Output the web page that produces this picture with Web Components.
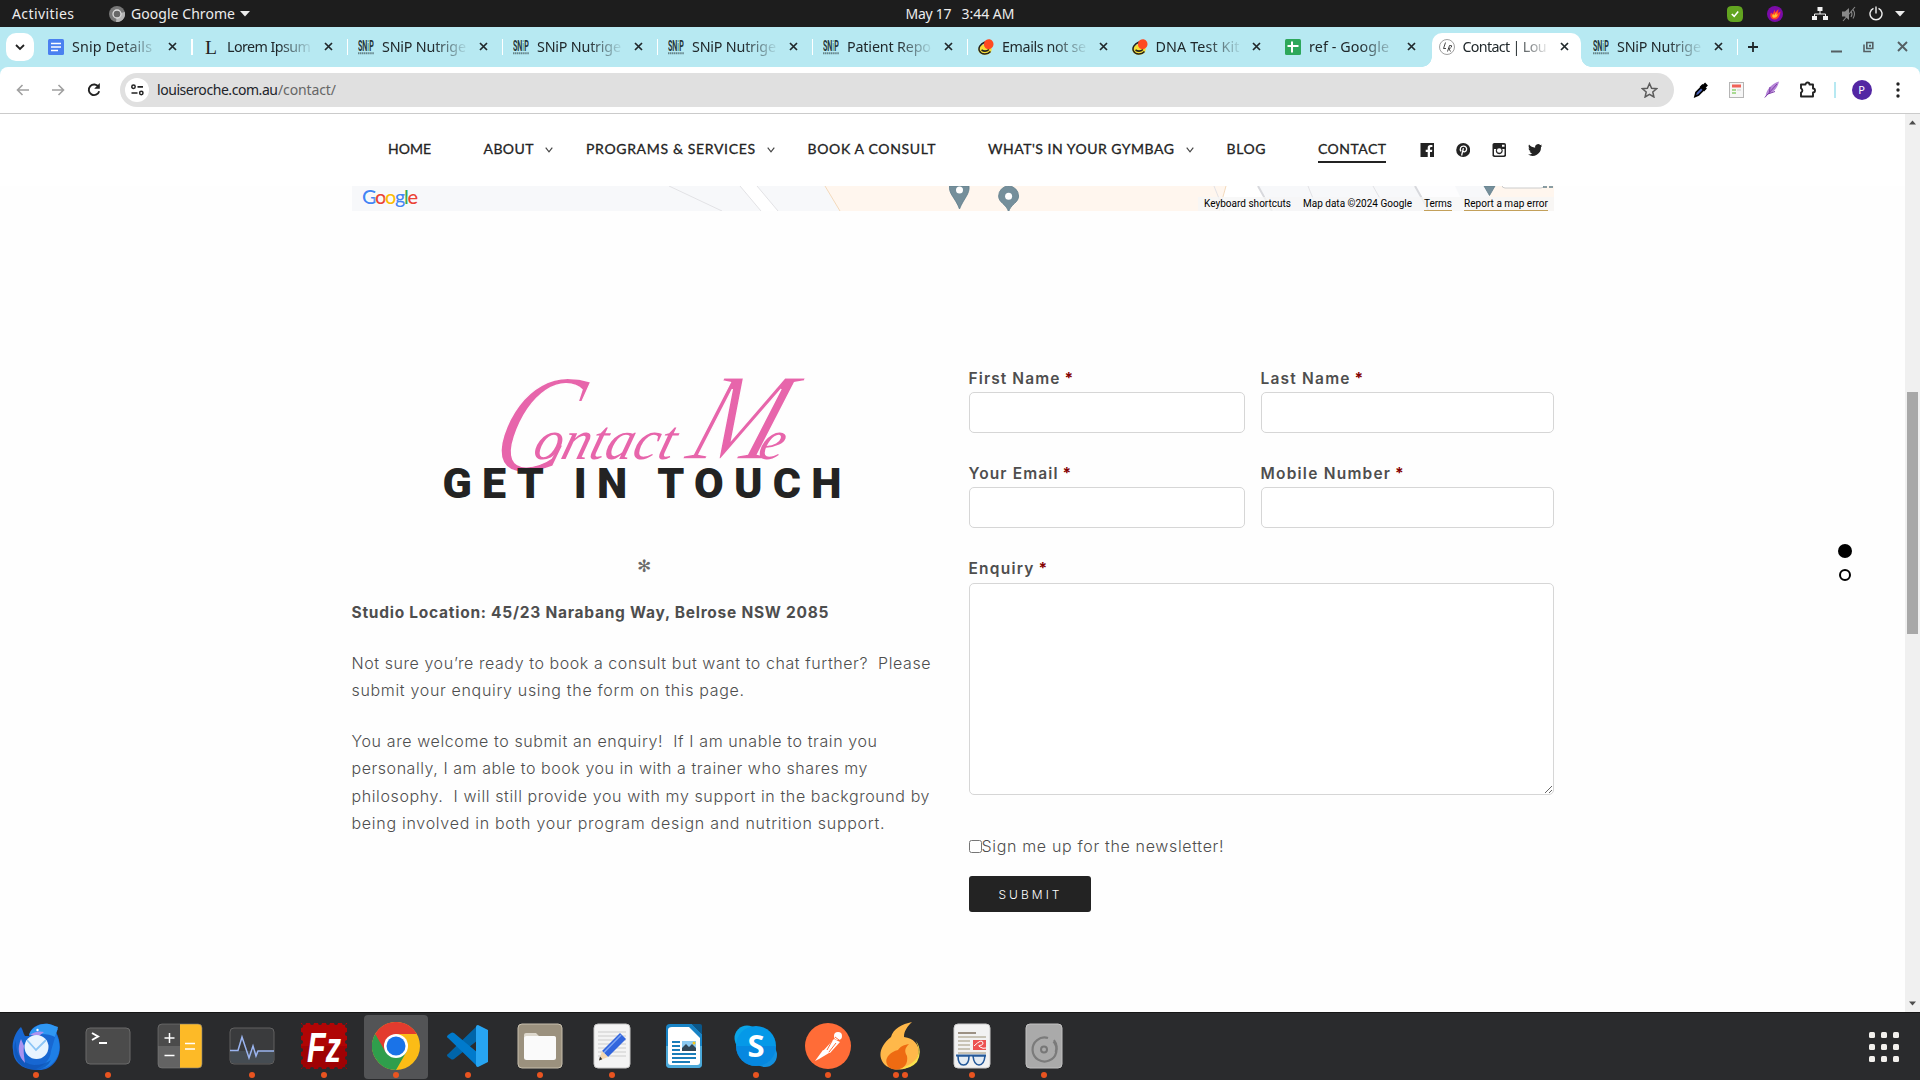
<!DOCTYPE html>
<html lang="en">
<head>
<meta charset="utf-8">
<title>Contact | Louise Roche</title>
<style>
html,body{margin:0;padding:0;overflow:hidden;background:#fefefe}
body{width:1920px;height:1080px;font-family:"Noto Sans",sans-serif}
</style>
</head>
<body>
<desk-shell></desk-shell>
<script>
const define=(name,html,setup)=>{
  const tpl=document.createElement('template');
  customElements.define(name,class extends HTMLElement{
    connectedCallback(){
      if(this.shadowRoot)return;
      const root=this.attachShadow({mode:'open'});
      tpl.innerHTML=typeof html==='function'?html(this):html;
      root.appendChild(tpl.content.cloneNode(true));
      if(setup)setup(this,root);
    }
  });
};

/* Text tracked out (or in) to a given width */
define('fit-text',`<style>:host{display:inline-block;white-space:pre;flex:none}span{display:inline-block}</style><span><slot></slot></span>`,(el,root)=>{
  const s=root.querySelector('span'),w=+el.getAttribute('w'),n=el.textContent.length;
  el.style.letterSpacing='0px';
  const nat=s.getBoundingClientRect().width;
  const ls=(w-nat)/(n-1);
  el.style.letterSpacing=ls.toFixed(3)+'px';
  el.style.width=w+'px';
});

/* ---------- system bar ---------- */
define('system-bar',`<style>
:host{display:grid;grid-template-columns:1fr auto 1fr;align-items:center;height:27px;background:#1d1d1d;color:#ececec;font:14px "Noto Sans",sans-serif}
div{display:flex;align-items:center;height:27px}
svg{display:block;flex:none}
.l{padding-left:12px}.r{justify-content:flex-end;padding-right:15px}
</style>
<div class="l"><fit-text w="62">Activities</fit-text>
<svg style="margin:0 6px 0 35px" width="16" height="16" viewBox="0 0 16 16"><circle cx="8" cy="8" r="8" fill="#777"/><path d="M8 8 15.8 6A8 8 0 0 1 7 16z" fill="#b5b5b5"/><circle cx="8" cy="8" r="4" fill="#666" stroke="#ddd" stroke-width="1.3"/></svg>
<fit-text w="104">Google Chrome</fit-text>
<svg style="margin-left:5px" width="10" height="6" viewBox="0 0 10 6"><path d="M0 0h10L5 5.5z" fill="#ececec"/></svg></div>
<div><fit-text w="46">May 17</fit-text><span style="width:10px"></span><fit-text w="53">3:44 AM</fit-text></div>
<div class="r">
<svg width="16" height="16" viewBox="0 0 16 16"><path d="M5 0h6q5 0 5 6v5q0 5-5 5H6q-6 0-6-6V4q0-4 5-4z" fill="#62a420"/><path d="M4.8 8 7.2 10.4 11.2 5.6" fill="none" stroke="#fff" stroke-width="1.6"/></svg>
<svg style="margin-left:24px" width="16" height="16" viewBox="0 0 16 16"><circle cx="8" cy="8" r="8" fill="#7b0ba8"/><path d="M7 13.500C3 12.500 2.500 9.500 4 6.500l1.500 1.500L8 3.500v3L11.500 3l-.5 4 2.500-1.500C13 10 11 14 7 13.500z" fill="#ff3d2e"/><path d="M6 11.500c-1.500-1.500-.5-3 .2-3.500l1 1.200L9.500 6v3l1.500-1c-.5 2.500-2.500 4.500-5 3.500z" fill="#ffc22d"/></svg>
<svg style="margin-left:29px" width="16" height="15" viewBox="0 0 16 15"><path d="M5.500 1h5v4h-5zM0 10h5v4H0zM11 10h5v4h-5z" fill="#f2f2f2"/><path d="M8 5v3M2.500 10V8h11v2" fill="none" stroke="#f2f2f2"/></svg>
<svg style="margin-left:13px" width="16" height="16" viewBox="0 0 16 16"><path d="M1 5.500h3L8 2v12L4 10.500H1z" fill="#888"/><path d="M10 5q2 3 0 6M12 3.500q3 4.500 0 9M2 15 14 1" fill="none" stroke="#888" stroke-width="1.100"/></svg>
<svg style="margin:0 12px 0 12px" width="14" height="15" viewBox="0 0 14 15"><path d="M4.500 2.300A6 6 0 1 0 9.500 2.300M7 .5v7" fill="none" stroke="#eee" stroke-width="1.400"/></svg>
<svg width="10" height="6" viewBox="0 0 10 6"><path d="M0 0h10L5 5.500z" fill="#ececec"/></svg>
</div>`);

/* ---------- browser tabs ---------- */
const FAV={
doc:'<rect width="16" height="16" rx="1.500" fill="#4a80f0"/><path d="M3 4.500h10M3 8h10M3 11.500h7" stroke="#fff" stroke-width="1.600"/>',
lorem:'<text x="2" y="14.500" font-family="Liberation Serif" font-size="18" textLength="12" lengthAdjust="spacingAndGlyphs" fill="#222">L</text>',
snip:'<g transform="translate(0 11.500) scale(.66 1)"><text font-family="Roboto" font-weight="700" font-size="15.500" textLength="24" lengthAdjust="spacingAndGlyphs" fill="#26383c">SN<tspan fill="#50a69b">i</tspan>P</text></g><path d="M0 14.200h16" stroke="#64848a" stroke-width="2" stroke-dasharray="1.400 .5"/>',
egg:'<ellipse cx="7" cy="10.500" rx="6.700" ry="5.300" fill="#f6de36"/><path d="M7 3C2 5 0 9 1.500 12c2 4 8 4 11 .5M3.500 11q4 2.500 7.500-.5" fill="none" stroke="#222" stroke-width="1.500"/><ellipse cx="10.700" cy="5" rx="4.800" ry="5" fill="#ff4a22" transform="rotate(12 10 5)"/>',
sheet:'<rect width="16" height="16" rx="1.500" fill="#2da75a"/><path d="M7 2.500v11M2.500 7h11" stroke="#fff" stroke-width="2"/>',
lr:'<circle cx="8" cy="8" r="7.500" fill="#fff" stroke="#888" stroke-width=".8"/><path d="M6.500 3.500 4.500 9.500h2.500M8.500 12.500 10.500 6.500q3-.5 2 1.500-.8 1.400-2.700 1.400L11.500 12.500" fill="none" stroke="#333" stroke-width=".9"/>'
};
define('browser-tab',el=>`<style>
:host{display:flex;align-items:center;width:${el.getAttribute('width')||155}px;height:34px;box-sizing:border-box;padding:0 0 7px 10px;flex:none;color:#20282b;font:14.300px "Noto Sans",sans-serif;position:relative}
:host([active]){background:#fff;border-radius:10px 10px 0 0;width:149.500px;margin:0 2px 0 3px;padding-left:7px}
.t{width:85px;margin-left:8px;white-space:nowrap;-webkit-mask:linear-gradient(90deg,#000 60%,rgba(0,0,0,.12) 98%)}
svg{display:block;flex:none}
.c{margin-left:11.500px}
.s{width:2px;height:16px;background:#fff;margin-left:13px}
:host([active]) .s,:host([nosep]) .s{display:none}
:host([active])::before,:host([active])::after{content:"";position:absolute;bottom:0;width:10px;height:10px}
:host([active])::before{left:-10px;background:radial-gradient(circle at 0 0,transparent 9.500px,#fff 10px)}
:host([active])::after{right:-10px;background:radial-gradient(circle at 100% 0,transparent 9.500px,#fff 10px)}
</style><svg width="16" height="16" viewBox="0 0 16 16">${FAV[el.getAttribute('icon')]}</svg><div class="t"><fit-text w="${el.getAttribute('t')||84}">${el.textContent}</fit-text></div>
<svg class="c" width="11" height="11" viewBox="0 0 11 11"><path d="M2 2l7 7M9 2l-7 7" stroke="#20282b" stroke-width="1.700"/></svg><i class="s"></i>`);
define('tab-strip',`<style>
:host{display:flex;height:40px;background:#b7e9f2;align-items:flex-end;position:relative}
.b{width:28px;height:28px;border-radius:10px;background:#fff;margin:0 4px 6px 6px;display:grid;place-items:center;flex:none}
.w{display:flex;align-items:center;height:34px;flex:1;padding:0 0 7px 9px;box-sizing:border-box}
svg{display:block;flex:none}
</style><div class="b"><svg width="10" height="7" viewBox="0 0 10 7"><path d="M1 1l4 4 4-4" fill="none" stroke="#222" stroke-width="1.800"/></svg></div>
<browser-tab icon="doc" t="80">Snip Details</browser-tab><browser-tab icon="lorem">Lorem Ipsum</browser-tab><browser-tab icon="snip">SNiP Nutrige</browser-tab><browser-tab icon="snip">SNiP Nutrige</browser-tab><browser-tab icon="snip">SNiP Nutrige</browser-tab><browser-tab icon="snip">Patient Repo</browser-tab><browser-tab icon="egg" width="153.500">Emails not se</browser-tab><browser-tab icon="egg" width="153.500">DNA Test Kit</browser-tab><browser-tab icon="sheet" width="153.500" t="80" nosep>ref - Google</browser-tab><browser-tab icon="lr" active>Contact | Lou</browser-tab><browser-tab icon="snip" width="154.500">SNiP Nutrige</browser-tab>
<div class="w"><svg width="12" height="12" viewBox="0 0 12 12"><path d="M6 1v10M1 6h10" stroke="#20282b" stroke-width="1.800"/></svg>
<svg style="margin-left:72px" width="11" height="12" viewBox="0 0 11 12"><path d="M0 10.500h11" stroke="#555f63" stroke-width="2"/></svg>
<svg style="margin-left:21px" width="11" height="12" viewBox="0 0 11 12"><path d="M3.800 1.500h6v6h-6z" fill="none" stroke="#555f63" stroke-width="1.600"/><path d="M1 3.500v7h7" fill="none" stroke="#555f63" stroke-width="1.600"/><path d="M6 3.700h2v2H6z" fill="#555f63"/></svg>
<svg style="margin-left:23px" width="11" height="11" viewBox="0 0 11 11"><path d="M1 1l9 9M10 1l-9 9" stroke="#555f63" stroke-width="1.900"/></svg></div>`);

/* ---------- toolbar ---------- */
define('address-bar',`<style>
:host{display:flex;align-items:center;height:47px;box-sizing:border-box;background:#b7e9f2;border-bottom:1px solid #cbcbcb}
.in{display:flex;align-items:center;background:#fff;border-radius:8px 8px 0 0;height:46px;width:100%;box-sizing:border-box;padding-bottom:1px}
svg{display:block;flex:none}
.o{display:flex;align-items:center;width:1554px;height:34px;border-radius:17px;background:#e0e0e0;margin:0 17px 0 18px;box-sizing:border-box;padding:0 16px 0 5px;font:14px "Noto Sans",sans-serif;color:#20242a}
.i{width:24px;height:24px;border-radius:50%;background:#fff;display:grid;place-items:center;margin-right:8px}
.a{width:20px;height:20px;border-radius:50%;background:#5326a3;color:#fff;font:11px/20px "Noto Sans";text-align:center;flex:none}
</style><div class="in">
<svg style="margin-left:16px" width="13" height="12" viewBox="0 0 13 12"><path d="M13 6H1.500M6.500 1l-5 5 5 5" fill="none" stroke="#a0a0a0" stroke-width="1.600"/></svg>
<svg style="margin-left:23px" width="13" height="12" viewBox="0 0 13 12"><path d="M0 6h11.500M6.500 1l5 5-5 5" fill="none" stroke="#a0a0a0" stroke-width="1.600"/></svg>
<svg style="margin-left:22px" width="14" height="14" viewBox="0 0 14 14"><path d="M11.600 4A5.300 5.300 0 1 0 12.200 8.300" fill="none" stroke="#222" stroke-width="1.900"/><path d="M12.800 0v5.700H7.200z" fill="#222"/></svg>
<div class="o" style="margin-left:19px"><div class="i"><svg width="13" height="12" viewBox="0 0 13 12"><circle cx="2.500" cy="2.800" r="1.700" fill="none" stroke="#222" stroke-width="1.500"/><circle cx="10.300" cy="9" r="1.700" fill="none" stroke="#222" stroke-width="1.500"/><path d="M6.500 2.800H12M.5 9h6" stroke="#222" stroke-width="1.700"/></svg></div>
<fit-text w="121">louiseroche.com.au</fit-text><fit-text w="58" style="color:#666">/contact/</fit-text>
<svg style="margin-left:auto" width="17" height="16" viewBox="0 0 17 16"><path d="M8.500 1.500 10.600 6.200 15.600 6.700 11.800 10 12.900 15 8.500 12.400 4.100 15 5.200 10 1.400 6.700 6.400 6.200z" fill="none" stroke="#5b5b5b" stroke-width="1.500"/></svg></div>
<svg style="margin-left:2px" width="17" height="17" viewBox="0 0 17 17"><path d="M2 15.500 3 11.500 9 5.500 11.500 8 5.500 14z" fill="#4b63bb" stroke="#000" stroke-width="1.700"/><path d="M8 4.500 12.500 9M10 6.500 13.500 3" stroke="#000" stroke-width="4"/></svg>
<svg style="margin-left:18.500px" width="15" height="16" viewBox="0 0 15 16"><rect x=".5" y=".5" width="14" height="15" fill="#f6f6f6" stroke="#b5b5b5"/><path d="M3 4h9" stroke="#f06258" stroke-width="3"/><path d="M3 8h4M3 11h4" stroke="#8fd070" stroke-width="1.500"/><path d="M8 8h4" stroke="#ccc"/></svg>
<svg style="margin-left:20px" width="16" height="17" viewBox="0 0 16 17"><path d="M1.500 16C2 9 7 3 15 .5 13.500 7 9 12.500 3.500 13z" fill="#b483d6"/><path d="M.8 16.500 13 3M4 13l7-2.500M5.500 11 6 6" stroke="#7d3da8" stroke-width="1" fill="none"/></svg>
<svg style="margin-left:19.500px" width="18" height="17" viewBox="0 0 18 17"><path d="M2 3.500h4.500a2 2 0 0 1 4 0H14v4a2 2 0 0 1 0 4v4H2v-4a2.300 2.300 0 0 0 0-4.200z" fill="none" stroke="#222" stroke-width="1.900" stroke-linejoin="round"/></svg>
<span style="width:2px;height:16px;background:#b7e9f2;margin:0 16px 0 16.500px"></span><div class="a">P</div>
<svg style="margin-left:24px" width="4" height="16" viewBox="0 0 4 16"><g fill="#222"><circle cx="2" cy="2" r="1.700"/><circle cx="2" cy="8" r="1.700"/><circle cx="2" cy="14" r="1.700"/></g></svg></div>`);

/* ---------- site navigation ---------- */
define('nav-link',el=>`<style>
:host{display:flex;align-items:center;height:28px;color:#232323;font:400 14px "Lato",sans-serif;flex:none}
.t{height:27px;line-height:25px;border-bottom:2px solid transparent;box-sizing:border-box;-webkit-text-stroke:.3px #232323}
:host([current]) .t{border-color:#232323}
.g{width:${el.getAttribute('gap')||52.5}px;height:28px;display:flex;align-items:center;padding-left:11.500px;box-sizing:border-box}
</style><div class="t"><fit-text w="${el.getAttribute('w')}">${el.textContent.replace('&','&amp;')}</fit-text></div><div class="g">${el.hasAttribute('menu')?'<svg width="8" height="6" viewBox="0 0 8 6"><path d="M.7.7 4 4.800 7.300.7" fill="none" stroke="#444" stroke-width="1.200"/></svg>':''}</div>`);
define('site-nav',`<style>
:host{display:flex;align-items:center;height:72px;padding:0 0 0 388px;box-sizing:border-box;background:#fff}
nav{display:flex;align-items:center;margin-top:-1px}
svg{display:block;margin-right:21.500px}
</style><nav>
<nav-link w="43">HOME</nav-link><nav-link w="50" menu>ABOUT</nav-link><nav-link w="169" menu>PROGRAMS &amp; SERVICES</nav-link><nav-link w="128">BOOK A CONSULT</nav-link><nav-link w="186" menu>WHAT'S IN YOUR GYMBAG</nav-link><nav-link w="39">BLOG</nav-link><nav-link w="68" gap="33.500" current>CONTACT</nav-link>
<svg width="14.500" height="14" viewBox="0 0 14.500 14"><path d="M.5 0h13.500v14h-4V9h2l.3-2.300H10V5q0-1 1.200-1h1.200V2h-2Q7.700 2 7.700 4.800v1.900H5.700V9h2v5H.5z" fill="#232323"/></svg>
<svg width="14.500" height="14" viewBox="0 0 14.500 14"><circle cx="7.200" cy="7" r="7" fill="#232323"/><path d="M5 8.300C3.300 5.500 4.800 3.200 7.400 3.200S11 5 10.500 6.900 8 9.300 7 8.200M7.400 5.200 5.600 12.500" fill="none" stroke="#fff" stroke-width="1.300"/></svg>
<svg width="14.500" height="14" viewBox="0 0 14.500 14"><rect x=".5" width="13.500" height="14" rx="1.800" fill="#232323"/><path d="M2 6h2.200a3.500 3.500 0 1 0 6.100 0h2.200v5.500q0 1-1 1H3q-1 0-1-1zM10 1.800h2.500v2H10z" fill="#fff"/><circle cx="7.250" cy="7.500" r="2.300" fill="#fff"/></svg>
<svg width="14.500" height="14" viewBox="0 0 24 22"><path d="M24 3.500c-.9.400-1.800.7-2.800.8 1-.6 1.800-1.600 2.200-2.700-1 .6-2 1-3.100 1.200A4.900 4.900 0 0 0 11.900 7.300C7.700 7.100 4.100 5.100 1.700 2.100.4 4.300 1 7.200 3.200 8.700c-.8 0-1.600-.2-2.200-.6 0 2.300 1.600 4.400 3.900 4.900-.7.200-1.500.2-2.200.1.600 2 2.400 3.400 4.600 3.400A9.900 9.900 0 0 1 0 18.500 14 14 0 0 0 21.500 6c1-.7 1.800-1.600 2.500-2.500z" fill="#232323"/></svg>
</nav>`);

/* ---------- map footer ---------- */
define('map-strip',`<style>
:host{display:grid;width:1202px;height:25px;margin-left:352px;overflow:hidden}
svg{grid-area:1/1;display:block}
.c{grid-area:1/1;display:flex;justify-content:flex-end;align-items:flex-end;font:10px/14px Roboto,sans-serif;color:#000}
.c div{background:rgba(245,245,245,.75);padding:0 6px;height:14px;box-sizing:border-box;margin-left:0}
.u{border-bottom:2px solid #c3a05a;line-height:12px;height:14px;box-sizing:border-box}
.g{grid-area:1/1;font:500 20px/20px "Lato",sans-serif;padding-left:10px;text-shadow:0 0 2px #fff,0 0 2px #fff}
</style>
<svg width="1202" height="25" viewBox="0 0 1202 25"><path fill="#f7f8fa" d="M0 0h1202v25H0z"/><path d="M473 0H874L866 25H488z" fill="#fff6ee"/><path d="M1140 0h62v25h-70z" fill="#fff6ee"/><path d="M388 0h17l21 25h-17z" fill="#fff"/><path d="M874 0h36l20 25H866z" fill="#fff"/><path d="M906 0h50l22 25h-54z" fill="#f7f8fa"/><path d="M1063 0h40l12 25h-36z" fill="#fff" opacity=".7"/><path d="M317 0l53 25M388 0l21 25M405 0l21 25M862 0l10 25M956 0l10 25M1021 0l14 25" stroke="#e2e2e5" fill="none"/><path d="M906 0l14 25M1063 0l14 25" stroke="#d8d9dd" stroke-width="2"/><path d="M874 0l-7 25M473 0l15 25" stroke="#f3d9bb" fill="none"/>
<g fill="#758f9b" stroke="#607d8b" stroke-width=".8"><path d="M597.500 0h19.500c1 8-5 12-9.500 23-4-11-11-15-10-23z"/><path d="M656.600 26c-2-8-10-9-10-16a10 10 0 0 1 20 0c0 7-8 8-10 16z"/><path d="M1132 0h11l-5.500 9.500z"/></g><circle cx="607.500" cy="4" r="3.500" fill="#fff"/><circle cx="656.600" cy="10.300" r="3.500" fill="#fff"/><rect x="1150" y="-8" width="42" height="10" rx="3" fill="#fff" stroke="#ccc"/><path d="M1191 1h11" stroke="#64808b" stroke-width="1.500" stroke-dasharray="4 2"/></svg>
<div class="g"><fit-text w="56"><span style="color:#4285f4">G</span><span style="color:#ea4335">o</span><span style="color:#fbbc05">o</span><span style="color:#4285f4">g</span><span style="color:#34a853">l</span><span style="color:#ea4335">e</span></fit-text></div>
<div class="c"><div><fit-text w="87">Keyboard shortcuts</fit-text></div><div><fit-text w="109">Map data ©2024 Google</fit-text></div><div><fit-text w="28" class="u">Terms</fit-text></div><div><fit-text w="84" class="u">Report a map error</fit-text></div></div>`);

/* ---------- left column ---------- */
define('contact-intro',`<style>
:host{display:block;width:602px;color:#4e4e4e;font:300 16px/27.200px Inter,sans-serif}
.script{height:98px;margin-top:-3px;font:italic 400 56px/97px "Liberation Serif",serif;color:#e765ab;white-space:pre;padding-left:140px;display:flex;align-items:baseline}
.script span{display:inline-block;transform:skewX(-16deg);transform-origin:0 80%}
.script .cap{-webkit-text-stroke:1.500px #fefefe}
.head{height:44px;font:900 43px/44px Roboto,sans-serif;color:#232323;padding-left:91px;position:relative}
.star{font:17px/20px "DejaVu Sans",sans-serif;color:#6a6a6a;text-align:center;width:585px;height:20px;margin-top:51px}
p{margin:0 0 23.800px}p fit-text{display:block;height:27.200px}
b{font-weight:700;font-size:15.500px;display:block}
</style>
<div class="script"><span class="cap" style="font-size:140px;line-height:97px;transform:translateY(12px) skewX(-18deg) scaleX(.8);margin-right:-57px">C</span><span>ontact</span><span> </span><span class="cap" style="font-size:124px;line-height:97px;transform:skewX(-20deg) scaleX(.85);margin:0 -38px 0 6px">M</span><span>e</span></div>
<div class="head"><fit-text w="399">GET IN TOUCH</fit-text></div>
<div class="star">✻</div>
<p style="margin-top:23px"><b><fit-text w="477">Studio Location: 45/23 Narabang Way, Belrose NSW 2085</fit-text></b></p>
<p><fit-text w="579">Not sure you’re ready to book a consult but want to chat further?  Please</fit-text><fit-text w="392.500">submit your enquiry using the form on this page.</fit-text></p>
<p><fit-text w="525.500">You are welcome to submit an enquiry!  If I am unable to train you</fit-text><fit-text w="516">personally, I am able to book you in with a trainer who shares my</fit-text><fit-text w="578">philosophy.  I will still provide you with my support in the background by</fit-text><fit-text w="533">being involved in both your program design and nutrition support.</fit-text></p>`);

/* ---------- form ---------- */
define('form-field',el=>`<style>
:host{display:block}
label{display:flex;gap:5px;font:600 15.500px/27px Inter,sans-serif;color:#4e4e4e;height:27px}
i{font-style:normal;color:#850000;font-weight:700}
input,textarea{display:block;width:100%;height:41px;box-sizing:border-box;border:1px solid #d6d6d6;border-radius:5px;background:#fff;margin:0}
textarea{height:212px;margin-top:1px}
</style><label><fit-text w="${el.getAttribute('w')}">${el.getAttribute('label')}</fit-text><i>*</i></label>${el.hasAttribute('area')?'<textarea></textarea>':'<input>'}`);
define('enquiry-form',`<style>
:host{display:block;width:585px;margin-left:15px;color:#4e4e4e;font:300 16px/27px Inter,sans-serif}
.r{display:grid;grid-template-columns:276px 293px;gap:16px;height:95px}
.k{display:flex;align-items:center;margin-top:38px;height:27px}
.k input{width:13px;height:13px;margin:0}
button{display:flex;align-items:center;width:122px;height:36px;border:0;border-radius:3px;background:#232323;color:#fff;font:300 12px Inter,sans-serif;padding:0 0 0 30px;margin-top:16px}
</style><div class="r"><form-field label="First Name" w="91"></form-field><form-field label="Last Name" w="89"></form-field></div>
<div class="r"><form-field label="Your Email" w="89"></form-field><form-field label="Mobile Number" w="129.500"></form-field></div>
<form-field area label="Enquiry" w="65"></form-field>
<div class="k"><input type="checkbox"><fit-text w="242">Sign me up for the newsletter!</fit-text></div>
<button><fit-text w="61">SUBMIT</fit-text></button>`);

define('section-dots',`<style>:host{display:flex;flex-direction:column;align-items:center;gap:11px;width:14px}
i{width:14px;height:14px;border-radius:50%;background:#000}b{width:12px;height:12px;box-sizing:border-box;border:2px solid #000;border-radius:50%}</style><i></i><b></b>`);
define('scroll-bar',`<style>:host{display:flex;flex-direction:column;align-items:center;width:15px;height:898px;background:#f0f0f0;flex:none}
svg{display:block}i{width:11px;height:242px;background:#a8a8a8;margin-top:267px}</style><svg style="margin-top:6px" width="7" height="5"><path d="M0 4.500h7L3.500.5z" fill="#4d4d4d"/></svg><i></i><svg style="margin-top:auto;margin-bottom:6px" width="7" height="5"><path d="M0 .5h7L3.500 4.500z" fill="#4d4d4d"/></svg>`);

define('web-page',`<style>
:host{display:flex;height:898px;background:#fefefe}
.p{flex:1;height:898px;overflow:hidden}
.m{display:flex;align-items:flex-start;padding-left:351.500px}
contact-intro{margin-top:155px}enquiry-form{margin-top:154px}
section-dots{margin:333px 0 0 284px}
</style><div class="p"><site-nav></site-nav><map-strip></map-strip><div class="m"><contact-intro></contact-intro><enquiry-form></enquiry-form><section-dots></section-dots></div></div><scroll-bar></scroll-bar>`);

/* ---------- dock ---------- */
const zig=(()=>{let d='';for(let i=0;i<6;i++)for(const[x,y]of[[4+i*8,1],[4+i*8,47],[1,4+i*8],[47,4+i*8]])d+=`<circle cx="${x}" cy="${y}" r="2" fill="#2a2b2d"/>`;return d})();
const APP={
thunderbird:'<path d="M1 28C-1 19 5 8 9 5c2 3 2 6 4 9l4 0C18 6 26 1 36 2c5 0 7 3 10 5l-2 3c5 9 5 20 1 27-5 9-13 12-22 11C9 47 1 39 1 28z" fill="#1767d2"/><path d="M17 13C20 5 28 1 37 2l9 3-1 4-2 6q-8-5-26-2z" fill="#2f97f2"/><path d="M44 12c5 9 4 19 0 25-5 8-13 10-20 10 8-4 14-8 15-18z" fill="#1e7fe6"/><path d="M4 18C3 32 10 42 22 43q10 0 17-5-4 9-16 10C8 47-2 34 4 18z" fill="#0d4fae" opacity=".6"/><path d="M9 17q-6 14 4 24-2-12-1-17zM18 13q6-5 14-3l-5 4z" fill="#a992ef"/><circle cx="24.500" cy="25" r="12" fill="#e8f4ff"/><path d="M15 18 24 28 34 18" fill="none" stroke="#8cc5f6" stroke-width="1.800"/><circle cx="25.500" cy="8" r="1.200" fill="#fff"/>',
term:'<rect x="2" y="6" width="44" height="36" rx="4" fill="#4b4b4b" stroke="#6a6a6a"/><path d="M8 11l6 3.500-6 3.500" fill="none" stroke="#fff" stroke-width="2"/><path d="M15 21h8" stroke="#fff" stroke-width="2"/>',
calc:'<rect x="2" y="2" width="44" height="44" rx="4" fill="#4b4b4b"/><path d="M2 24h22v22H6q-4 0-4-4z" fill="#636363"/><path d="M24 2h18q4 0 4 4v36q0 4-4 4H24z" fill="#fdba27"/><path d="M13.500 11v10M8.500 16h10M8.500 33.500h10M29 21.500h10M29 27h10" stroke="#fff" stroke-width="1.500"/><rect x="2" y="2" width="44" height="44" rx="4" fill="none" stroke="#7d7d7d" opacity=".6"/>',
monitor:'<rect x="2" y="6" width="44" height="36" rx="4" fill="#3a3b3d" stroke="#616161"/><path d="M2.500 29h43v9q0 3-3 3h-37q-3 0-3-3z" fill="#454c52"/><path d="M2 28.500h8L14 15l7 21 4-12 3 10 2-5h16" fill="none" stroke="#9bb5f0" stroke-width="1.500"/>',
fz:'<path d="M1 1h46v46H1z" fill="#b00505"/><path d="M1 24h46v23H1z" fill="#8d0003" opacity=".5"/>'+zig+'<text x="7" y="40" font-family="Liberation Sans" font-style="italic" font-weight="700" font-size="42" textLength="34" lengthAdjust="spacingAndGlyphs" fill="#fff">Fz</text>',
chrome:'<circle cx="24" cy="24" r="24" fill="#fbbc16"/><path d="M3.200 12A24 24 0 0 1 44.800 12H24z" fill="#e33b2e"/><path d="M3.200 12A24 24 0 0 0 24 48L34.400 30 24 24z" fill="#2f9e4c"/><path d="M3.200 12 13.600 30 24 12z" fill="#e33b2e"/><circle cx="24" cy="24" r="12" fill="#fff"/><circle cx="24" cy="24" r="9.500" fill="#1a73e8"/>',
code:'<path d="M34 3 4 32q-2 1 0 3l3 2q1 1 3 0L34 18z" fill="#0065a9"/><path d="M34 45 4 16q-2-1 0-3l3-2q1-1 3 0L34 31z" fill="#007acc"/><path d="M34 3 44 8v32l-10 5q-2 0-2-2V5q0-2 2-2z" fill="#27a5f2"/>',
files:'<rect x="2" y="2" width="44" height="44" rx="4" fill="#9b917e" stroke="#c7bfad"/><path d="M8 13q0-2 2-2h10l3 3h15q2 0 2 2v10H8z" fill="#ddd8cd"/><rect x="8" y="14" width="32" height="24" rx="2.500" fill="#fafafa"/>',
edit:'<rect x="6" y="2" width="36" height="44" rx="4" fill="#f4f4f4" stroke="#c9c9c9"/><path d="M10 10h28M10 14h28M10 18h28M10 22h28M10 26h28M10 30h28M10 34h28" stroke="#ccc"/><path d="M32 11 38 17 20 35 14 29z" fill="#3366dd"/><path d="M33 13 15.500 31" stroke="#7da4f4" stroke-width="1.500"/><path d="M14 29 20 35 11 38.500z" fill="#f5d7b0"/><path d="M12 34.500 14.300 37.200 11 38.500z" fill="#333"/>',
writer:'<path d="M10 2h22l10 10v30q0 4-4 4H10q-4 0-4-4V6q0-4 4-4z" fill="#1883c5"/><path d="M6 24h36v18q0 4-4 4H10q-4 0-4-4z" fill="#4ca9d9"/><path d="M32 2h8q2 0 2 2v8z" fill="#0a5688"/><path d="M12 5h17l11 11v24q0 3-3 3H11q-3 0-3-3V8q0-3 4-3z" fill="#fff"/><path d="M12 20h8M12 24h8M12 28h8M12 32h24M12 36h24M12 40h18" stroke="#1a7db9" stroke-width="1.800"/><path d="M22 19h14v10H22z" fill="#8bc9f1"/><path d="M22 29v-3l4-4 3 3 3-3 4 4v3z" fill="#314656"/><circle cx="34" cy="21" r="1.500" fill="#f5c518"/>',
skype:'<circle cx="15" cy="16" r="12.500" fill="#0aa5e8"/><circle cx="33" cy="33" r="12" fill="#1390df"/><circle cx="24" cy="24" r="20" fill="#0599e8"/><path d="M4 24a20 20 0 0 0 40 0z" fill="#087fdc" opacity=".65"/><text x="24" y="35" text-anchor="middle" font-family="Open Sans" font-weight="700" font-size="31" fill="#fff">S</text>',
postman:'<circle cx="24" cy="24" r="23" fill="#ff6c37"/><circle cx="34" cy="14" r="4" fill="#fff"/><path d="M30 17 36 20 26 31 19 29zM19 28 25 31 15 37 11 39z" fill="#fff"/><path d="M31 15 35 18M28 19 23 28M32 21 25 30" stroke="#ff6c37"/>',
flame:'<path d="M36 0C26 2 17 7 15 15 6 22 2 31 6 39c5 10 23 12 32 2 9-10 5-24-10-26 0-6 3-10 8-15z" fill="#ffb84a"/><path d="M40 19q7 14-4 22-8 6-18 5 15 3 23-6 6-11-1-21z" fill="#f9e24c"/><path d="M33 22c-6 1-9 3-11 6-12 3-15 13-8 18 8 4 19 0 17-12-3-5-2-8 2-12z" fill="#ee6b12"/>',
docview:'<rect x="6" y="2" width="36" height="44" rx="4" fill="#f2f2f2" stroke="#cecece"/><path d="M10 11h18" stroke="#9c9184" stroke-width="2"/><path d="M10 15h28M10 19h12M10 23h12M10 27h12M10 31h28" stroke="#c8c3b5" stroke-width="2"/><rect x="25" y="18" width="13" height="10" fill="#ed5151"/><path d="M26 24q8-8 9-3c0 4-7 1-3 4q3 2 6 1" fill="none" stroke="#fff"/><path d="M8 33.500h30" stroke="#24599a" stroke-width="2"/><path d="M10 34h11q0 9-5.500 9T10 34zm15 0h12q-1 9-6 9t-6-9z" fill="#e4ecf4" stroke="#24599a" stroke-width="1.600"/>',
disk:'<rect x="6" y="2" width="36" height="44" rx="4" fill="#aaa" stroke="#c1c1c1"/><path d="M33.500 19.500A12 12 0 1 1 28 16" fill="none" stroke="#7b7b7b" stroke-width="2.200"/><path d="M34 18a12 12 0 0 1 1.500 12" fill="none" stroke="#7b7b7b" stroke-width="2"/><circle cx="24" cy="27.500" r="3" fill="none" stroke="#777" stroke-width="2"/>'
};
define('dock-app',el=>`<style>
:host{display:flex;flex-direction:column;align-items:center;width:64px;height:64px;box-sizing:border-box;padding-top:7px;border-radius:4px;flex:none}
:host([active]){background:#535456}
svg{display:block;flex:none}div{display:flex;gap:3px;margin-top:2px}i{width:6px;height:6px;border-radius:50%;background:#e95420}
</style><svg width="48" height="48" viewBox="0 0 48 48">${APP[el.getAttribute('app')]}</svg><div>${'<i></i>'.repeat(+(el.getAttribute('n')||1))}</div>`);
define('app-dock',`<style>
:host{display:flex;align-items:center;gap:8px;height:68px;background:#2a2b2d;border-top:1px solid #161616;box-sizing:border-box;padding:0 21px 0 4px}
.g{margin-left:auto;display:grid;grid-template-columns:repeat(3,6px);gap:6px}.g i{width:6px;height:6px;border-radius:1.500px;background:#f2f0ed}
</style>${Object.keys(APP).map(k=>`<dock-app app="${k}"${k==='chrome'?' active':''} n="${k==='calc'||k==='writer'?0:k==='flame'?2:1}"></dock-app>`).join('')}<div class="g">${'<i></i>'.repeat(9)}</div>`);

define('desk-shell',`<style>:host{display:flex;flex-direction:column;width:1920px;height:1080px;overflow:hidden}</style>
<system-bar></system-bar><tab-strip></tab-strip><address-bar></address-bar><web-page></web-page><app-dock></app-dock>`);
</script>
</body>
</html>
